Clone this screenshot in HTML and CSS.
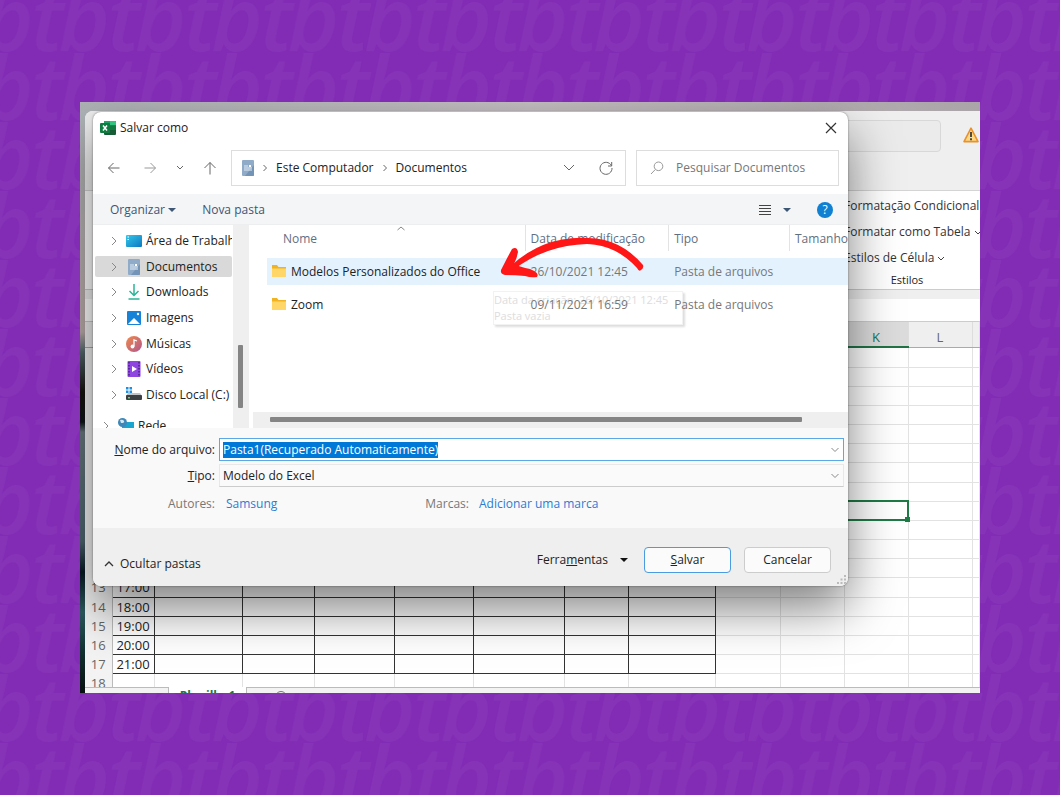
FILE: index.html
```html
<!DOCTYPE html>
<html lang="pt-BR">
<head>
<meta charset="utf-8">
<title>Salvar como</title>
<link rel="stylesheet" href="styles.css">
</head>
<body>
<svg class="wallpaper" aria-hidden="true">
  <defs>
    <pattern id="bt" x="-18" y="53" width="76.4" height="69" patternUnits="userSpaceOnUse">
      <g class="mark">
        <text x="0" y="67">b</text><text x="49" y="67">t</text>
        <text x="-76.4" y="67">b</text><text x="-27.4" y="67">t</text>
      </g>
    </pattern>
  </defs>
  <rect width="100%" height="100%" fill="url(#bt)"/>
</svg>
<main class="shot">
  <section class="excel" aria-label="Excel">
    <div class="excel-title">
      <div class="excel-search"></div>
      <svg class="warn" width="16" height="16" viewBox="0 0 16 16"><path d="M8 1.2 15 14.6H1Z" fill="#ffd983" stroke="#e8912d" stroke-width="1.6" stroke-linejoin="round"/><path d="M8 5v5M8 11.2v2" stroke="#3a3a3a" stroke-width="1.8"/></svg>
    </div>
    <div class="ribbon">
      <div class="styles-group">
        <button type="button">Formatação Condicional <svg width="8" height="6" viewBox="0 0 8 6"><path d="M1 1l3 3 3-3"/></svg></button>
        <button type="button">Formatar como Tabela <svg width="8" height="6" viewBox="0 0 8 6"><path d="M1 1l3 3 3-3"/></svg></button>
        <button type="button">Estilos de Célula <svg width="8" height="6" viewBox="0 0 8 6"><path d="M1 1l3 3 3-3"/></svg></button>
        <div class="group-name">Estilos</div>
      </div>
    </div>
    <div class="formula"></div>
    <div class="sheet-wrap">
    <table class="sheet">
      <colgroup><col class="w27"><col class="w42"><col class="w88"><col class="w72"><col class="w80"><col class="w79"><col class="w91"><col class="w64"><col class="w87"><col class="w65"><col class="w64"><col class="w64"><col class="w64"><col></colgroup>
      <thead><tr><th></th><th></th><th></th><th></th><th></th><th></th><th></th><th></th><th></th><th></th><th></th><th class="sel">K</th><th>L</th><th></th></tr></thead>
      <tbody id="rows"></tbody>
    </table>
    </div>
    <div class="tabs"><div class="tab-gap"></div><div class="tab">Planilha1</div><div class="tab-rest"><span class="plus"></span></div></div>
  </section>

  <section class="dialog" role="dialog" aria-labelledby="dlg-title">
    <header class="titlebar">
      <svg width="16" height="16" viewBox="0 0 16 16"><rect x="4" y="1" width="12" height="14" rx="1" fill="#185c37"/><path d="M4 1h6v4.5H4z" fill="#21a366"/><path d="M10 1h5a1 1 0 0 1 1 1v3.500h-6z" fill="#33c481"/><path d="M10 5.500h6V10h-6z" fill="#107c41"/><rect y="3" width="10" height="10" rx="1" fill="#107c41"/><path d="m3 5.500 4 5M7 5.500l-4 5" stroke="#fff" stroke-width="1.500"/></svg>
      <h1 id="dlg-title">Salvar como</h1>
      <button type="button" class="close" aria-label="Fechar"><svg width="12" height="12" viewBox="0 0 12 12"><path d="m1 1 10 10M11 1 1 11"/></svg></button>
    </header>

    <div class="nav">
      <div class="nav-buttons">
        <button type="button" aria-label="Voltar"><svg width="14" height="14" viewBox="0 0 14 14"><path d="M12.500 7h-11M6.500 2l-5 5 5 5"/></svg></button>
        <button type="button" aria-label="Avançar" class="dim"><svg width="14" height="14" viewBox="0 0 14 14"><path d="M1.500 7h11M7.500 2l5 5-5 5"/></svg></button>
        <button type="button" aria-label="Recentes" class="small"><svg width="8" height="6" viewBox="0 0 8 6"><path d="m1 1 3 3 3-3"/></svg></button>
        <button type="button" aria-label="Acima"><svg width="14" height="14" viewBox="0 0 14 14"><path d="M7 13.500v-12M1.500 7 7 1.500 12.500 7"/></svg></button>
      </div>
      <div class="address">
        <svg class="doc" width="12" height="16" viewBox="0 0 12 16"><rect width="12" height="16" rx="1" fill="#8fabc8"/><path d="M12 5v10a1 1 0 0 1-1 1H3z" fill="#7394b7"/><path d="M2 6h4M2 8h8M2 10h8" stroke="#e4edf6"/><rect x="7" y="5" width="2" height="2" fill="#fff"/></svg>
        <svg class="crumb" width="6" height="8" viewBox="0 0 6 8"><path d="m1.500 1 3 3-3 3"/></svg>
        <a href="#">Este Computador</a>
        <svg class="crumb" width="6" height="8" viewBox="0 0 6 8"><path d="m1.500 1 3 3-3 3"/></svg>
        <a href="#">Documentos</a>
        <button type="button" class="drop" aria-label="Locais anteriores"><svg width="12" height="8" viewBox="0 0 12 8"><path d="m1 1 5 5 5-5"/></svg></button>
        <button type="button" aria-label="Atualizar"><svg width="14" height="14" viewBox="0 0 14 14"><path d="M12.300 4.500A6 6 0 1 0 13 7M12.700 1v4H9"/></svg></button>
      </div>
      <label class="search">
        <svg width="14" height="14" viewBox="0 0 14 14"><circle cx="8.500" cy="5.300" r="4.300"/><path d="M5.300 8.500 1 13"/></svg>
        <input type="search" aria-label="Pesquisar Documentos" placeholder="Pesquisar Documentos">
      </label>
    </div>

    <div class="toolbar">
      <button type="button">Organizar <i class="tri"></i></button>
      <button type="button">Nova pasta</button>
      <button type="button" class="view" aria-label="Modo de exibição"><svg width="12" height="12" viewBox="0 0 12 12"><path d="M0 1.500h12M0 4.500h12M0 7.500h12M0 10.500h12" stroke="#444"/></svg><i class="tri"></i></button>
      <button type="button" class="help" aria-label="Ajuda">?</button>
    </div>

    <div class="browser">
      <nav class="tree">
        <ul>
          <li><svg class="exp" width="6" height="8" viewBox="0 0 6 8"><path d="m1 0 4 4-4 4"/></svg><svg width="16" height="16" viewBox="0 0 16 16"><defs><linearGradient id="desk" x2="1" y2="1"><stop stop-color="#35c7e8"/><stop offset="1" stop-color="#0b78c2"/></linearGradient></defs><rect y="2" width="16" height="12" rx="1" fill="url(#desk)"/><path d="M1.500 4h1.500M1.500 6.500h1.500" stroke="#fff"/></svg><a href="#">Área de Trabalho</a></li>
          <li class="current"><svg class="exp" width="6" height="8" viewBox="0 0 6 8"><path d="m1 0 4 4-4 4"/></svg><svg width="16" height="16" viewBox="0 0 16 16"><rect x="2" width="12" height="16" rx="1" fill="#8fabc8"/><path d="M14 5v10a1 1 0 0 1-1 1H5z" fill="#7394b7"/><path d="M4 6h4M4 8h8M4 10h8" stroke="#e4edf6"/><rect x="9" y="5" width="2" height="2" fill="#fff"/></svg><a href="#">Documentos</a></li>
          <li><svg class="exp" width="6" height="8" viewBox="0 0 6 8"><path d="m1 0 4 4-4 4"/></svg><svg width="16" height="16" viewBox="0 0 16 16" fill="none" stroke="#2bb596" stroke-width="1.500"><path d="M8 0v11M3.500 7 8 11.500 12.500 7M2.500 15h11"/></svg><a href="#">Downloads</a></li>
          <li><svg class="exp" width="6" height="8" viewBox="0 0 6 8"><path d="m1 0 4 4-4 4"/></svg><svg width="16" height="16" viewBox="0 0 16 16"><rect x="1" y="1" width="14" height="14" rx="1" fill="#1683d8"/><path d="m2 14 6-6 6 6z" fill="#fff"/><circle cx="12" cy="4" r="1.200" fill="#fff"/></svg><a href="#">Imagens</a></li>
          <li><svg class="exp" width="6" height="8" viewBox="0 0 6 8"><path d="m1 0 4 4-4 4"/></svg><svg width="16" height="16" viewBox="0 0 16 16"><defs><linearGradient id="mus" x2="1" y2="1"><stop stop-color="#f08a4b"/><stop offset="1" stop-color="#b0568f"/></linearGradient></defs><circle cx="8" cy="8" r="8" fill="url(#mus)"/><circle cx="6.500" cy="10.500" r="1.900" fill="#fff"/><path d="M8 10.500V4l3 1" stroke="#fff" stroke-width="1.300" fill="none"/></svg><a href="#">Músicas</a></li>
          <li><svg class="exp" width="6" height="8" viewBox="0 0 6 8"><path d="m1 0 4 4-4 4"/></svg><svg width="16" height="16" viewBox="0 0 16 16"><rect x="1.500" y="0" width="13" height="16" rx="1" fill="#8f45e0"/><path d="M3 1v14M13 1v14" stroke="#3f1c78" stroke-width="1.300" stroke-dasharray="1.500 1.500"/><path d="m6 5 5 3-5 3z" fill="#fff"/></svg><a href="#">Vídeos</a></li>
          <li><svg class="exp" width="6" height="8" viewBox="0 0 6 8"><path d="m1 0 4 4-4 4"/></svg><svg width="16" height="16" viewBox="0 0 16 16"><path d="M0 0h2.500v2.500H0zM3.500 0H6v2.500H3.500zM0 3.500h2.500V6H0zM3.500 3.500H6V6H3.500z" fill="#1c8fe0"/><path d="M2 6h12l2 3H0z" fill="#bfc3c7"/><rect y="8" width="16" height="5" rx="1" fill="#3b3f42"/><rect x="2" y="10" width="2" height="1.500" fill="#5ad66a"/></svg><a href="#">Disco Local (C:)</a></li>
        </ul>
        <div class="root"><svg class="exp" width="6" height="8" viewBox="0 0 6 8"><path d="m1 0 4 4-4 4"/></svg><svg width="16" height="16" viewBox="0 0 16 16"><rect x="4" y="4" width="12" height="9" fill="#18a5d0"/><circle cx="4.500" cy="4.500" r="4.500" fill="#3f87b8"/><path d="M2 2q3-1 4 1t-3 2z" fill="#cfe9f5"/></svg><a href="#">Rede</a></div>
      </nav>
      <div class="vscroll"><div class="vthumb"></div></div>
      <div class="files">
        <div class="tip" role="tooltip">Data da criação: 26/10/2021 12:45<br>Pasta vazia</div>
        <svg class="sort" width="8" height="5" viewBox="0 0 8 5"><path d="m0.500 4 3.500-3 3.500 3"/></svg>
        <table class="list">
          <colgroup><col class="c-name"><col class="c-date"><col class="c-type"><col></colgroup>
          <thead><tr><th><div>Nome</div></th><th><div>Data de modificação</div></th><th><div>Tipo</div></th><th><div>Tamanho</div></th></tr></thead>
          <tbody>
            <tr class="hot"><td><svg width="16" height="14" viewBox="0 0 16 14"><path d="M1 1h5l1.500 2H15v9.500H1z" fill="#f0b323"/><path d="M1 4.500h14V12a1 1 0 0 1-1 1H1z" fill="#ffd667"/></svg>Modelos Personalizados do Office</td><td>26/10/2021 12:45</td><td>Pasta de arquivos</td><td></td></tr>
            <tr><td><svg width="16" height="14" viewBox="0 0 16 14"><path d="M1 1h5l1.500 2H15v9.500H1z" fill="#f0b323"/><path d="M1 4.500h14V12a1 1 0 0 1-1 1H1z" fill="#ffd667"/></svg>Zoom</td><td>09/11/2021 16:59</td><td>Pasta de arquivos</td><td></td></tr>
          </tbody>
        </table>
        <svg class="arrow" width="146" height="44" viewBox="0 0 146 44"><path d="M143 29Q120 2 87 2Q44 0 12 29L13 34Q46 9 87 8Q116 9 137 32Q139 36 141 34Q144 32 143 29Z"/><path d="M12 13Q17 10 18 16Q17 22 14 28Q20 31 30 33Q40 37 37 41Q31 42 25 40Q16 39 5 39Q0 38 1 34Q7 22 12 13Z"/></svg>
        <div class="hscroll"><div class="hthumb"></div></div>
      </div>
    </div>

    <form class="fields">
      <label for="fname"><u>N</u>ome do arquivo:</label>
      <div class="combo focus"><input id="fname" type="text" value="Pasta1(Recuperado Automaticamente)"><svg width="8" height="6" viewBox="0 0 8 6"><path d="m0.500 1 3.500 3.500 3.500-3.500"/></svg></div>
      <label for="ftype"><u>T</u>ipo:</label>
      <div class="combo"><select id="ftype"><option>Modelo do Excel</option></select><svg width="8" height="6" viewBox="0 0 8 6"><path d="m0.500 1 3.500 3.500 3.500-3.500"/></svg></div>
      <span class="meta-label">Autores:</span>
      <div class="meta"><a href="#">Samsung</a><span class="tags">Marcas:</span><a href="#">Adicionar uma marca</a></div>
    </form>

    <footer class="actions">
      <button type="button" class="hide"><svg width="10" height="7" viewBox="0 0 10 7"><path d="m1 6 4-4 4 4"/></svg>Ocultar pastas</button>
      <button type="button" class="tools"><span>Ferra<u>m</u>entas</span><i class="tri"></i></button>
      <button type="button" class="btn primary"><span><u>S</u>alvar</span></button>
      <button type="button" class="btn">Cancelar</button>
      <svg class="grip" width="10" height="10" viewBox="0 0 10 10"><path d="M7 0h2v2H7zM7 3.500h2v2H7zM7 7h2v2H7zM3.500 3.500h2v2h-2zM3.500 7h2v2h-2zM0 7h2v2H0z"/></svg>
    </footer>
  </section>
</main>
<script src="sheet.js"></script>
</body>
</html>
```
FILE: sheet.js
```js
// Schedule grid: hours are listed from row 13, the first one below the dialog.
const body = document.getElementById('rows');
for (let r = 1; r <= 18; r++) {
  const tr = body.insertRow();
  const head = document.createElement('th');
  if (r >= 13) head.textContent = r;
  tr.append(head);
  for (let c = 0; c < 13; c++) {
    const td = tr.insertCell();
    if (c < 8 && r < 18) td.className = 'ink';
    if (c === 0 && r >= 13 && r < 18) td.textContent = (r + 4) + ':00';
    if (c === 10 && r === 9) {
      td.className = 'active';
      td.innerHTML = '<span></span>';
    }
  }
}
```
FILE: styles.css
```css
* { box-sizing: border-box; }
body {
  margin: 0;
  min-height: 100vh;
  padding: 102px 80px;
  background: #822bb5;
  font-family: "Open Sans", "Noto Sans", sans-serif;
  font-size: 12px;
  line-height: 16px;
  color: #222;
}
button, input, select { font: inherit; color: inherit; border: 0; padding: 0; margin: 0; background: none; outline: 0; }
a { color: inherit; text-decoration: none; }
svg { flex: none; }
.wallpaper { position: fixed; inset: 0; width: 100%; height: 100%; }
.mark { font: italic 600 88px "Open Sans", sans-serif; fill: #8633b7; }

.shot {
  position: relative;
  overflow: hidden;
  padding: 9px 0 0 5px;
  background:
    linear-gradient(90deg, #aeb2b5, #c5bfc2 50%, #aaa3a7) top / 100% 9px no-repeat,
    linear-gradient(#aeb4b8 0, #b8a9a8 230px, #53666b 250px, #15120e 290px, #0f1518 320px, #66757b 330px, #4a626d 440px, #071824 470px, #2d5960 510px, #10302f 550px, #071010 100%);
}

/* spreadsheet window */
.excel { background: #fff; border-radius: 8px 0 0 0; overflow: hidden; }
.excel-title { display: flex; align-items: flex-start; gap: 22px; height: 80px; padding: 9px 1px 0 200px; background: #efefef; border-bottom: 1px solid #d4d4d4; }
.excel-search { flex: 1; height: 32px; border: 1px solid #d8d8d8; border-radius: 4px; background: #ebebeb; }
.warn { margin-top: 7px; }
.ribbon { display: flex; justify-content: flex-end; height: 99px; border-bottom: 1px solid #ccc; }
.styles-group { display: flex; flex-direction: column; align-items: flex-start; width: 136px; padding-top: 2px; }
.styles-group button { line-height: 26px; white-space: nowrap; color: #333; }
.styles-group svg { vertical-align: middle; fill: none; stroke: #444; }
.group-name { width: 126px; font-size: 11px; line-height: 18px; text-align: center; }
.formula { height: 32px; border-top: 9px solid #efefef; border-bottom: 1px solid #ccc; }
.sheet-wrap { height: 365px; overflow: hidden; }
.sheet { width: 100%; table-layout: fixed; border-collapse: collapse; }
.sheet td { height: 19px; padding: 0; line-height: 18px; border: 1px solid #e2e2e2; font-size: 13px; text-align: center; }
.sheet tbody tr:nth-child(6n + 1) td { height: 20px; }
.sheet th { padding: 0; font-weight: 400; color: #666; line-height: 18px; background: #f3f3f3; border-right: 1px solid #bbb; font-size: 13px; }
.sheet thead th { height: 25px; padding-top: 6px; background: #efefef; border-right-color: #ddd; border-bottom: 1px solid #aaa; }
.sheet thead th.sel { background: #dcdcdc; color: #217346; border-bottom: 2px solid #217346; }
.sheet td.ink { border: 1px solid #333; }
.sheet td.active { position: relative; border: 2px solid #1e7b45; }
.active span { position: absolute; right: -3px; bottom: -3px; width: 5px; height: 5px; background: #1e7b45; }
.w27 { width: 27px; } .w42 { width: 42px; } .w88 { width: 88px; } .w72 { width: 72px; }
.w80 { width: 80px; } .w79 { width: 79px; } .w91 { width: 91px; } .w64 { width: 64px; }
.w87 { width: 87px; } .w65 { width: 65px; }
.tabs { display: flex; height: 6px; overflow: hidden; }
.tab-gap { width: 84px; border-top: 1px solid #bbb; border-right: 1px solid #bbb; background: #f3f3f3; }
.tab { width: 77px; text-align: center; font-weight: 700; color: #217346; line-height: 18px; }
.tab-rest { flex: 1; border-top: 1px solid #bbb; border-left: 1px solid #bbb; background: #f3f3f3; }
.plus { display: block; width: 12px; height: 12px; margin: 3px 0 0 28px; border: 1px solid #777; border-radius: 50%; }

/* save dialog */
.dialog {
  position: absolute;
  top: 10px;
  left: 13px;
  right: 132px;
  overflow: hidden;
  background: #fff;
  border-radius: 8px;
  box-shadow: 0 0 2px rgba(0,0,0,.5), 0 22px 50px rgba(0,0,0,.5);
}
.titlebar { display: flex; align-items: center; gap: 4px; height: 30px; padding: 1px 11px 0 7px; }
.titlebar h1 { margin: 0; font-size: 12px; font-weight: 400; }
.close { margin-left: auto; display: flex; }
.close svg { fill: none; stroke: #333; stroke-width: 1.2; }
.nav { display: flex; gap: 10px; padding: 8px 9px 8px 10px; height: 52px; }
.nav svg { fill: none; stroke: #666; }
.nav svg.doc { stroke: none; }
.nav-buttons { display: flex; align-items: center; width: 118px; gap: 16px; padding-left: 4px; }
.nav-buttons button { display: flex; justify-content: center; width: 14px; }
.nav-buttons button:first-child { margin-right: 6px; }
.nav-buttons .dim svg { stroke: #999; }
.address, .search { display: flex; align-items: center; border: 1px solid #ddd; height: 36px; }
.address { flex: 2; gap: 8px; padding: 0 12px 0 10px; }
.address a { white-space: nowrap; }
.address button { display: flex; }
.address .drop { margin-left: auto; margin-right: 16px; }
.search { width: 203px; gap: 12px; padding-left: 13px; }
.nav .search svg { stroke: #999; }
.search input { flex: 1; min-width: 0; }
.search input::placeholder { color: #777; opacity: 1; }
.toolbar { display: flex; align-items: center; height: 31px; padding: 1px 15px 0 17px; background: #f4f5f7; color: #3c5674; border-bottom: 1px solid #eceef0; }
.toolbar button + button { margin-left: 26px; }
.tri { display: inline-block; vertical-align: middle; border: 4px solid transparent; border-top-color: currentColor; border-bottom: 0; }
.toolbar .view { display: flex; align-items: center; gap: 12px; margin-left: auto; }
.toolbar .help { width: 16px; height: 16px; border-radius: 50%; background: #0f80d2; color: #fff; }

.browser { display: flex; height: 203px; }
.tree { width: 140px; overflow: hidden; padding: 3px 1px 0 2px; }
.tree ul { display: grid; grid-auto-rows: 1fr; height: 180px; margin: 0; padding: 0; list-style: none; }
.tree li { display: flex; align-items: center; gap: 4px; padding-left: 16px; white-space: nowrap; overflow: hidden; }
.tree .exp { margin-right: 5px; fill: none; stroke: #888; }
.tree li.current { background: #d9d9d9; margin: 2px 0; border-radius: 2px; }
.root { display: flex; align-items: center; gap: 4px; padding: 10px 0 0 8px; }
.vscroll { width: 16px; background: #efefef; padding: 120px 6px 0 5px; }
.vthumb { height: 63px; background: #858585; border-radius: 1px; }
.files { position: relative; flex: 1; display: flex; flex-direction: column; margin-left: 4px; }
.list { position: relative; margin-left: 14px; table-layout: fixed; border-spacing: 0; }
.c-name { width: 258px; } .c-date { width: 144px; } .c-type { width: 121px; }
.list th { height: 30px; padding: 0; vertical-align: top; text-align: left; font-weight: 400; color: #5f6f82; }
.list th div { height: 26px; padding: 0 0 0 5px; line-height: 28px; border-left: 1px solid #e3e3e3; }
.list th:first-child div { padding-left: 15px; border-left-color: transparent; }
.list td { height: 33px; padding: 1px 0 0 6px; border: 3px solid transparent; border-width: 3px 0; background-clip: padding-box; color: #777; white-space: nowrap; }
.list td:first-child { padding-left: 4px; color: #222; }
.list td svg { vertical-align: -2px; margin-right: 4px; }
.hot td { background-color: #e4f2fe; }
.sort { position: absolute; left: 144px; top: 1px; fill: none; stroke: #888; }
.tip { position: absolute; left: 240px; top: 66px; width: 190px; height: 34px; color: #ddd; font-size: 11px; border: 1px solid #f2f2f2; box-shadow: 2px 2px 2px #ddd; white-space: nowrap; }
.arrow { position: absolute; left: 247px; top: 11px; fill: #ff1616; }
.hscroll { height: 16px; margin-top: auto; padding: 5px 46px 0 17px; background: #efefef; }
.hthumb { height: 5px; background: #858585; border-radius: 1px; }

.fields { display: grid; grid-template-columns: 122px 1fr; column-gap: 4px; row-gap: 3px; height: 100px; padding: 10px 4px 0 0; align-content: start; background: #f9f9f9; }
.fields label, .meta-label { text-align: right; line-height: 23px; }
.combo { display: flex; align-items: center; height: 23px; padding: 0 4px 0 3px; border: 1px solid #e8e8e8; border-bottom-color: #ccc; background: #fafafa; }
.combo svg { margin-left: auto; fill: none; stroke: #888; }
.combo select { appearance: none; flex: 1; height: 20px; }
.combo.focus { border-color: #5aa9e6; background: #fff; }
.combo input { field-sizing: content; background: #0078d7; color: #fff; height: 16px; }
.meta-label, .tags { color: #777; }
.meta-label { line-height: 28px; }
.meta { display: flex; line-height: 28px; padding-left: 7px; color: #2b7cd3; }
.tags { margin: 0 10px 0 148px; }

.actions { position: relative; display: flex; align-items: center; height: 58px; padding: 0 17px 0 11px; background: #efefef; }
.hide { display: flex; align-items: center; gap: 6px; margin-right: auto; padding-top: 13px; }
.hide svg { fill: none; stroke: #333; stroke-width: 1.3; }
.tools { display: flex; align-items: center; gap: 12px; margin-right: 16px; padding-top: 6px; }
.tools .tri { color: #111; }
.btn { width: 87px; height: 26px; margin-top: 6px; border: 1px solid #ccc; border-radius: 4px; background: #fbfbfb; }
.primary { border-color: #4a9be0; margin-right: 13px; }
.grip { position: absolute; right: 1px; bottom: 1px; fill: #bbb; }
```
